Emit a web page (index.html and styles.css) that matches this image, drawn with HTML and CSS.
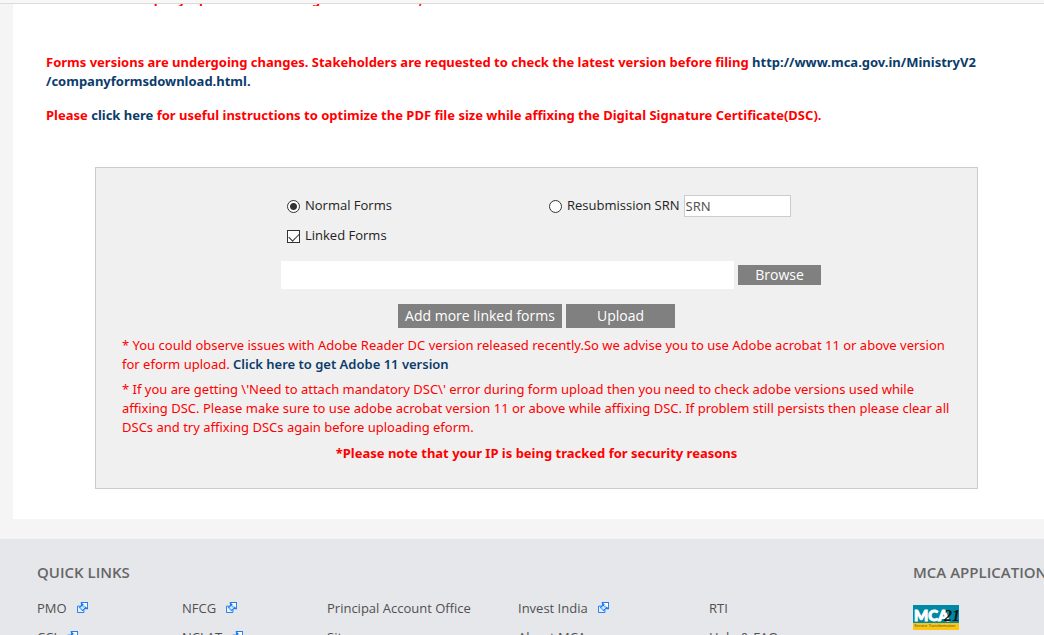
FILE: index.html
```
<!DOCTYPE html>
<html lang="en">
<head>
<meta charset="utf-8">
<title>Upload eForms</title>
<meta name="viewport" content="width=device-width, initial-scale=1">
<link rel="stylesheet" href="styles.css">
</head>
<body>
<svg class="defs" aria-hidden="true">
  <symbol id="external" viewBox="0 0 12 12">
    <path fill="#e8f2ff" stroke="#1a73e8" d="M.5 4.500h7v7h-7z"/>
    <path fill="#1a7cf0" d="M4 0h8v8h-2L8.500 7.500 6 10 2 6l2.500-2.500z"/>
    <path fill="#8fc1fb" d="M5.500 4 8 6.500 5.500 9 3 6.500z"/>
    <path fill="#fff" d="M5.500 1H11v5.500L9.500 5 6.500 8 4.500 6l3-3z"/>
    <path fill="#5aa2f7" d="M7 4h2v1H8v1H6V5h1z"/>
  </symbol>
</svg>
<div class="topbar"></div>
<main class="content">
  <div class="previous"><p class="alert">Check if the company's profile under filing version details, if</p></div>
  <section class="notices">
    <p class="alert">Forms versions are undergoing changes. Stakeholders are requested to check the latest version before filing <a href="#">http://www.mca.gov.in/MinistryV2<wbr>/companyformsdownload.html.</a></p>
    <p class="alert">Please <a href="#">click here</a> for useful instructions to optimize the PDF file size while affixing the Digital Signature Certificate(DSC).</p>
  </section>
  <form class="panel">
    <div class="options">
      <div class="option"><input type="radio" id="normal" name="kind" checked><label for="normal">Normal Forms</label></div>
      <div class="option"><input type="radio" id="resub" name="kind"><label for="resub">Resubmission SRN</label><input class="srn" type="text" placeholder="SRN" aria-label="SRN"></div>
      <div class="option"><input type="checkbox" id="linked" checked><label for="linked">Linked Forms</label></div>
    </div>
    <div class="file-row">
      <input class="file" type="text" aria-label="Form file">
      <button class="btn browse" type="button">Browse</button>
    </div>
    <div class="actions">
      <button class="btn add" type="button">Add more linked forms</button>
      <button class="btn upload" type="button">Upload</button>
    </div>
    <div class="notes">
      <p>* You could observe issues with Adobe Reader DC version released recently.So we advise you to use Adobe acrobat 11 or above version for eform upload. <a href="#">Click here to get Adobe 11 version</a></p>
      <p>* If you are getting \'Need to attach mandatory DSC\' error during form upload then you need to check adobe versions used while affixing DSC. Please make sure to use adobe acrobat version 11 or above while affixing DSC. If problem still persists then please clear all DSCs and try affixing DSCs again before uploading eform.</p>
    </div>
    <p class="alert tracked">*Please note that your IP is being tracked for security reasons</p>
  </form>
</main>
<footer class="footer">
  <section>
    <h2>QUICK LINKS</h2>
    <div class="links">
      <ul>
        <li><a href="#">PMO<svg><use href="#external"/></svg></a></li>
        <li><a href="#">CCI<svg><use href="#external"/></svg></a></li>
      </ul>
      <ul>
        <li><a href="#">NFCG<svg><use href="#external"/></svg></a></li>
        <li><a href="#">NCLAT<svg><use href="#external"/></svg></a></li>
      </ul>
      <ul>
        <li><a href="#">Principal Account Office</a></li>
        <li><a href="#">Sitemap</a></li>
      </ul>
      <ul>
        <li><a href="#">Invest India<svg><use href="#external"/></svg></a></li>
        <li><a href="#">About MCA</a></li>
      </ul>
      <ul>
        <li><a href="#">RTI</a></li>
        <li><a href="#">Help &amp; FAQ</a></li>
      </ul>
    </div>
  </section>
  <section class="apps">
    <h2>MCA APPLICATIONS</h2>
    <a class="logo" href="#" aria-label="MCA21">
      <svg viewBox="0 0 46 25">
        <path fill="#0089a5" d="M0 0h46v18H0z"/>
        <path fill="#fcc60f" d="M0 18h46v7H0z"/>
        <text class="logo-mca" x="1" y="16">MCA</text>
        <text class="logo-21" x="31" y="16">21</text>
        <text class="logo-tag" x="1" y="22">Service Transformation</text>
      </svg>
    </a>
  </section>
</footer>
</body>
</html>
```

FILE: styles.css
```
* { box-sizing: border-box; }

body {
  margin: 0;
  height: 100vh;
  overflow: hidden;
  background: #f5f5f5;
  color: #222;
  font: 13px/19px "Noto Sans", "Open Sans", sans-serif;
}

p, h2, ul { margin: 0; padding: 0; }
ul { list-style: none; }
a { color: #0b3c6b; text-decoration: none; }
.defs { display: none; }

.topbar {
  height: 4px;
  background: #f7f7f7;
  border-bottom: 1px solid #dcdcdc;
}

.content {
  margin-left: 13px;
  padding-bottom: 30px;
  background: #fff;
}

.previous {
  display: flex;
  align-items: flex-end;
  height: 2px;
  overflow: hidden;
  padding-left: 33px;
}
.previous p { line-height: 14px; white-space: nowrap; }

.alert { color: #f00; font-weight: 700; }

.notices {
  display: flex;
  flex-direction: column;
  gap: 15px;
  padding: 47px 33px 42px;
}

.panel {
  margin: 0 66px 0 82px;
  padding: 26px 26px 25px;
  background: #f0f0f0;
  border: 1px solid #ccc;
}

.options {
  display: grid;
  grid-template-columns: 262px auto;
  row-gap: 7px;
  margin-left: 165px;
}
.option { display: flex; align-items: center; height: 23px; }
.option label {
  margin-left: 5px;
  font-family: "Open Sans", "Noto Sans", sans-serif;
}

.option input[type="radio"],
.option input[type="checkbox"] {
  appearance: none;
  width: 13px;
  height: 13px;
  margin: 2px 0 0;
  background: #fff;
  border: 1px solid #333;
}
.option input[type="radio"] { border-radius: 50%; }
.option input[type="radio"]:checked {
  background: radial-gradient(circle, #333 3px, #fff 4px);
}
.option input[type="checkbox"]:checked::after {
  content: "";
  display: block;
  width: 9px;
  height: 5px;
  margin: 2px 1px;
  border: solid #333;
  border-width: 0 0 1px 1px;
  transform: rotate(-45deg);
}

.srn {
  width: 107px;
  height: 22px;
  margin-left: 4px;
  padding: 0 1px;
  border: 1px solid #ccc;
  background: #fff;
  font: inherit;
}
.srn::placeholder { color: #555; opacity: 1; }

.file-row {
  display: flex;
  align-items: center;
  gap: 4px;
  margin: 14px 0 0 159px;
}
.file {
  width: 453px;
  height: 28px;
  border: 0;
  background: #fff;
  font: inherit;
}

.btn {
  border: 0;
  padding: 0;
  background: #808080;
  color: #fff;
  font: 14px/20px "Open Sans", "Noto Sans", sans-serif;
}
.browse { width: 83px; height: 20px; }

.actions {
  display: flex;
  justify-content: center;
  gap: 4px;
  margin-top: 15px;
}
.add { width: 164px; height: 24px; }
.upload { width: 109px; height: 24px; }

.notes {
  display: flex;
  flex-direction: column;
  gap: 6px;
  margin: 8px -8px 0 0;
  color: #f00;
}
.notes a { font-weight: 600; }
.tracked { margin-top: 7px; text-align: center; }

.footer {
  display: grid;
  grid-template-columns: 876px auto;
  margin-top: 20px;
  padding: 23px 0 0 37px;
  background: #e6e7eb;
}
.footer h2 {
  color: #666;
  font: 600 15px/20px "Open Sans", "Noto Sans", sans-serif;
  white-space: nowrap;
}
.links {
  display: grid;
  grid-template-columns: 145px 145px 191px 191px auto;
  margin-top: 17px;
}
.links li { height: 29px; }
.links a {
  color: #505050;
  font-family: "Open Sans", "Noto Sans", sans-serif;
  white-space: nowrap;
}
.links svg { width: 11px; height: 11px; margin-left: 10px; }

.apps { overflow: hidden; }
.logo { display: block; width: 46px; margin-top: 23px; }
.logo svg { display: block; width: 46px; height: 25px; }
.logo-mca { font: 900 15px Lato, sans-serif; fill: #fff; stroke: #fff; }
.logo-21 { font: italic 700 16px "Liberation Serif", serif; fill: #111; }
.logo-tag { font: 4px "Liberation Sans", sans-serif; fill: #555; }
```
